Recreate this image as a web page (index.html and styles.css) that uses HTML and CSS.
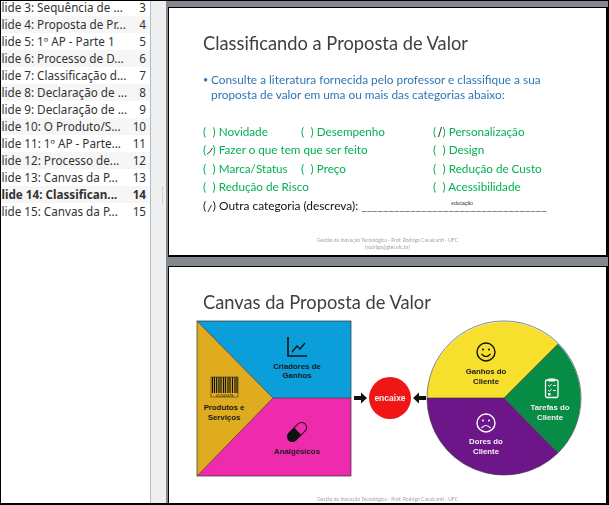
FILE: index.html
```html
<!DOCTYPE html>
<html lang="en">
<head>
    <meta charset="UTF-8">
    <title>Apresentação - Canvas da Proposta de Valor</title>
    <link rel="stylesheet" href="styles.css">
</head>
<body>
    <div class="window">
        <!-- Slide navigator -->
        <div class="navigator">
            <div class="slide-row"><span class="slide-name">Slide 3: Sequência de ...</span><span class="slide-num">3</span></div>
            <div class="slide-row"><span class="slide-name">Slide 4: Proposta de Pr...</span><span class="slide-num">4</span></div>
            <div class="slide-row"><span class="slide-name">Slide 5: 1º AP - Parte 1</span><span class="slide-num">5</span></div>
            <div class="slide-row"><span class="slide-name">Slide 6: Processo de D...</span><span class="slide-num">6</span></div>
            <div class="slide-row"><span class="slide-name">Slide 7: Classificação d...</span><span class="slide-num">7</span></div>
            <div class="slide-row"><span class="slide-name">Slide 8: Declaração de ...</span><span class="slide-num">8</span></div>
            <div class="slide-row"><span class="slide-name">Slide 9: Declaração de ...</span><span class="slide-num">9</span></div>
            <div class="slide-row"><span class="slide-name">Slide 10: O Produto/S...</span><span class="slide-num">10</span></div>
            <div class="slide-row"><span class="slide-name">Slide 11: 1º AP - Parte...</span><span class="slide-num">11</span></div>
            <div class="slide-row"><span class="slide-name">Slide 12: Processo de...</span><span class="slide-num">12</span></div>
            <div class="slide-row"><span class="slide-name">Slide 13: Canvas da P...</span><span class="slide-num">13</span></div>
            <div class="slide-row current"><span class="slide-name">Slide 14: Classifican...</span><span class="slide-num">14</span></div>
            <div class="slide-row"><span class="slide-name">Slide 15: Canvas da P...</span><span class="slide-num">15</span></div>
        </div>

        <div class="splitter"><span class="grip"></span></div>

        <!-- Slides -->
        <div class="stage">
            <div class="slide slide-one">
                <h1 class="slide-title">Classificando a Proposta de Valor</h1>
                <p class="bullet">Consulte a literatura fornecida pelo professor e classifique a sua proposta de valor em uma ou mais das categorias abaixo:</p>
                <div class="options">
                    <span class="opt"><span class="paren">( )</span> Novidade</span>
                    <span class="opt"><span class="paren">( )</span> Desempenho</span>
                    <span class="opt"><span class="paren">( )<svg class="mark" viewBox="0 0 10 14"><path d="M6.5 2 L3.5 12"/></svg></span> Personalização</span>
                    <span class="opt wide"><span class="paren">( )<svg class="mark" viewBox="0 0 10 14"><path d="M2 11 Q5 10 7.5 5"/></svg></span> Fazer o que tem que ser feito</span>
                    <span class="opt"><span class="paren">( )</span> Design</span>
                    <span class="opt"><span class="paren">( )</span> Marca/Status</span>
                    <span class="opt"><span class="paren">( )</span> Preço</span>
                    <span class="opt"><span class="paren">( )</span> Redução de Custo</span>
                    <span class="opt wide"><span class="paren">( )</span> Redução de Risco</span>
                    <span class="opt"><span class="paren">( )</span> Acessibilidade</span>
                </div>
                <div class="other">
                    <span class="paren">( )<svg class="mark" viewBox="0 0 10 14"><path d="M6.5 6 L3 13"/></svg></span> Outra categoria (descreva): <span class="blank">__________________________________<span class="answer">educação</span></span>
                </div>
                <div class="slide-footer">Gestão da Inovação Tecnológica - Prof. Rodrigo Cavalcanti - UFC<br>(rodrigo@gtel.ufc.br)</div>
            </div>

            <div class="slide slide-two">
                <h1 class="slide-title">Canvas da Proposta de Valor</h1>
                <svg class="canvas" width="438" height="170" viewBox="169 316 438 170">
                    <!-- value map -->
                    <rect x="197" y="321" width="154" height="155" fill="#ee2aad"/>
                    <path d="M197 321 H351 V398 H273 Z" fill="#0a9edb"/>
                    <path d="M197 321 L273 398 L197 476 Z" fill="#dfac1f"/>
                    <path d="M273 398 H351" stroke="#333" stroke-width=".6"/>
                    <path d="M197 321 L273 398 L197 476" fill="none" stroke="#333" stroke-width=".6"/>
                    <rect x="197" y="321" width="154" height="155" fill="none" stroke="#333" stroke-width=".7"/>

                    <path d="M288 337 V356 H307" fill="none" stroke="#111" stroke-width="1.6"/>
                    <path d="M292 352 L297 346 L300 349 L305 343" fill="none" stroke="#111" stroke-width="1.4"/>
                    <text class="lbl" x="297" y="369">Criadores de</text>
                    <text class="lbl" x="297" y="378">Ganhos</text>

                    <rect x="211" y="377" width="27" height="20" fill="none" stroke="#222" stroke-width=".5"/>
                    <path d="M212.5 377 V393 M214.5 377 V393 M216.7 377 V393 M219 377 V393 M221 377 V393 M223.5 377 V393 M225.5 377 V393 M228 377 V393 M230 377 V393 M232.5 377 V393 M235 377 V393 M237 377 V393" stroke="#111" stroke-width="1.2"/>
                    <text class="tiny" x="224.500" y="396.500">012345678</text>
                    <text class="lbl" x="224" y="409.500">Produtos e</text>
                    <text class="lbl" x="224" y="420">Serviços</text>

                    <g transform="rotate(-45 297 432)">
                        <rect x="285" y="426.500" width="24" height="11" rx="5.500" fill="#111"/>
                        <path d="M298 427.500 H303.500 A4.500 4.500 0 0 1 303.500 436.500 H298 Z" fill="#ee2aad"/>
                    </g>
                    <text class="lbl" x="297" y="454">Analgésicos</text>

                    <!-- fit -->
                    <path d="M354 396 H361 V392.500 L367 398 L361 403.500 V400 H354 Z" fill="#111"/>
                    <circle cx="390" cy="398" r="21" fill="#f01616"/>
                    <text class="lbl light big" x="390" y="401">encaixe</text>
                    <path d="M426 396 H419 V392.500 L413 398 L419 403.500 V400 H426 Z" fill="#111"/>

                    <!-- customer profile -->
                    <path d="M427 398 A77 77 0 0 1 558 344 L504 398 Z" fill="#f7df2e"/>
                    <path d="M558 344 A77 77 0 0 1 558 453 L504 398 Z" fill="#068c44"/>
                    <path d="M558 453 A77 77 0 0 1 427 398 H504 Z" fill="#6d1689"/>
                    <circle cx="504" cy="398" r="77" fill="none" stroke="#333" stroke-width=".6"/>
                    <path d="M427 398 H504 L558 344 M504 398 L558 453" fill="none" stroke="#333" stroke-width=".6"/>

                    <circle cx="486" cy="352" r="9" fill="none" stroke="#111" stroke-width="1.4"/>
                    <circle cx="483" cy="349.500" r="1" fill="#111"/>
                    <circle cx="489" cy="349.500" r="1" fill="#111"/>
                    <path d="M481.500 354 Q486 359 490.500 354" fill="none" stroke="#111" stroke-width="1.2"/>
                    <text class="lbl" x="486" y="374">Ganhos do</text>
                    <text class="lbl" x="486" y="384">Cliente</text>

                    <rect x="545.500" y="380" width="12.500" height="17.500" rx="1.500" fill="none" stroke="#fff" stroke-width="1.300"/>
                    <rect x="548.500" y="378.500" width="6.500" height="3" fill="#fff"/>
                    <path d="M548 385 L549.500 386.500 L551.500 384 M553 385.500 H556 M548 390 L549.500 391.500 L551.500 389 M553 390.500 H556" fill="none" stroke="#fff" stroke-width=".9"/>
                    <rect x="548" y="393" width="2.500" height="2.500" fill="#fff"/>
                    <text class="lbl light" x="550" y="410">Tarefas do</text>
                    <text class="lbl light" x="550" y="420">Cliente</text>

                    <circle cx="486" cy="423" r="9" fill="none" stroke="#fff" stroke-width="1.400"/>
                    <circle cx="483" cy="420.500" r="1" fill="#fff"/>
                    <circle cx="489" cy="420.500" r="1" fill="#fff"/>
                    <path d="M481.500 428 Q486 423 490.500 428" fill="none" stroke="#fff" stroke-width="1.200"/>
                    <text class="lbl light" x="486" y="444">Dores do</text>
                    <text class="lbl light" x="486" y="454">Cliente</text>
                </svg>
                <div class="slide-footer">Gestão da Inovação Tecnológica - Prof. Rodrigo Cavalcanti - UFC<br>(rodrigo@gtel.ufc.br)</div>
            </div>
        </div>
    </div>
</body>
</html>
```

FILE: styles.css
```css
/* Global */
html, body {
    margin: 0;
    padding: 0;
    height: 100%;
    overflow: hidden;
    background: #fff;
}

.window {
    display: flex;
    box-sizing: border-box;
    width: 609px;
    height: 505px;
    border: 1px solid #000;
    border-bottom-width: 2px;
    overflow: hidden;
}

/* Slide navigator */
.navigator {
    flex: none;
    width: 149px;
    margin-top: -2px;
    overflow: hidden;
    background: #fff;
    font-family: "Noto Sans", sans-serif;
    font-size: 11.700px;
    color: #333;
    border-right: 1px solid #b9babc;
}

.slide-row {
    display: flex;
    justify-content: space-between;
    height: 17px;
    line-height: 17px;
    padding-right: 4px;
    white-space: nowrap;
}

.slide-row:nth-child(even) {
    background: #f6f6f6;
}

.slide-row.current {
    font-weight: bold;
}

.slide-name {
    margin-left: -6px;
}

.splitter {
    flex: none;
    display: flex;
    justify-content: flex-end;
    box-sizing: border-box;
    width: 15px;
    padding-right: 3px;
    background: #eeeff1;
}

.grip {
    width: 0;
    height: 16px;
    margin-top: 186px;
    border-left: 1px dotted #b5b6b8;
}

/* Slides */
.stage {
    flex: 1;
    display: flex;
    flex-direction: column;
    gap: 9px;
    padding: 6px 0 0 2px;
    background: #85898f;
    min-width: 0;
}

.slide {
    flex: none;
    position: relative;
    box-sizing: border-box;
    width: 440px;
    background: #fff;
    border: 1px solid #000;
    border-right-width: 2px;
    border-bottom-width: 2px;
    font-family: Lato, sans-serif;
    overflow: hidden;
}

.slide-one {
    height: 250px;
    padding: 23px 0 0 34px;
}

.slide-two {
    height: 250px;
}

.slide-title,
.bullet,
.options,
.other,
.slide-footer {
    filter: blur(0.3px);
}

.slide-title {
    margin: 0;
    font-size: 18.300px;
    line-height: 24px;
    font-weight: normal;
    color: #404040;
}

.slide-two .slide-title {
    margin: 23px 0 0 34px;
}

.bullet {
    position: relative;
    margin: 17px 40px 0 8px;
    font-size: 11.850px;
    line-height: 15px;
    color: #2e75b6;
}

.bullet::before {
    content: "•";
    position: absolute;
    left: -8px;
    font-size: 9px;
}

.options {
    display: grid;
    grid-template-columns: 98px 132px 1fr;
    grid-auto-rows: 18.300px;
    margin-top: 20px;
    font-size: 11.700px;
    line-height: 18px;
    color: #00b050;
}

.opt.wide {
    grid-column: span 2;
}

.paren {
    position: relative;
    word-spacing: 3.500px;
}

.mark {
    position: absolute;
    left: 2px;
    top: 1px;
    width: 10px;
    height: 14px;
    fill: none;
    stroke: #333;
    stroke-width: 1;
}

.other {
    margin-top: 2px;
    font-size: 11.900px;
    line-height: 18px;
    color: #111;
    white-space: nowrap;
}

.blank {
    position: relative;
    color: #555;
}

.answer {
    position: absolute;
    left: 90px;
    top: 1px;
    font-family: "Liberation Sans", sans-serif;
    font-size: 5px;
    line-height: 8px;
    color: #333;
}

.slide-footer {
    position: absolute;
    left: 0;
    right: 0;
    top: 229px;
    font-size: 5px;
    line-height: 7px;
    text-align: center;
    color: #a3a3a3;
}

/* Canvas diagram */
.canvas {
    display: block;
    position: absolute;
    left: 0;
    top: 49px;
    filter: blur(0.4px);
}

.lbl {
    font-family: "Liberation Sans", sans-serif;
    font-size: 7.800px;
    font-weight: bold;
    text-anchor: middle;
    fill: #1a1a1a;
}

.lbl.light {
    fill: #f3f3f3;
}

.lbl.big {
    font-size: 8.500px;
}

.tiny {
    font-family: "Liberation Sans", sans-serif;
    font-size: 3.500px;
    text-anchor: middle;
    fill: #111;
}
```
